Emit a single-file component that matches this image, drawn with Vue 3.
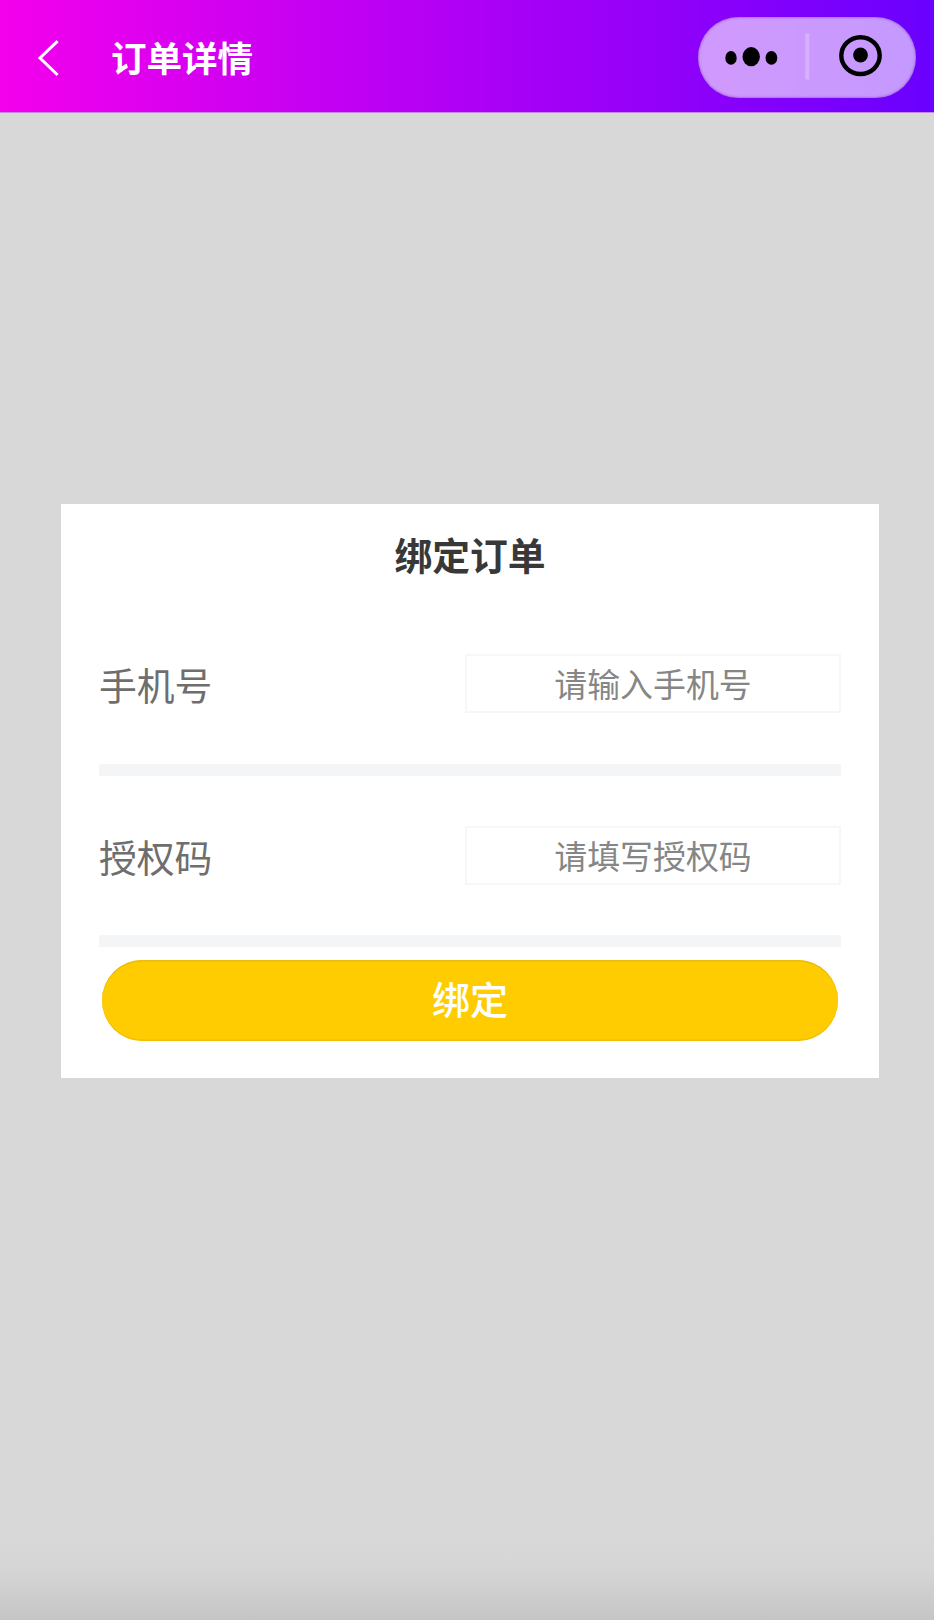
<script setup>
import { reactive } from 'vue'

const fields = [
  { key: 'phone', label: '手机号', placeholder: '请输入手机号' },
  { key: 'code', label: '授权码', placeholder: '请填写授权码' },
]
const form = reactive({ phone: '', code: '' })
</script>

<template>
  <div class="page">
    <header class="navbar">
      <svg class="back" width="24" height="40" viewBox="0 0 24 40">
        <path d="M21.6 3.2 L4 20 L21.6 37" fill="none" stroke="#fff" stroke-width="3" />
      </svg>
      <h1 class="nav-title">订单详情</h1>
      <div class="capsule">
        <svg width="218" height="80" viewBox="0 0 218 80">
          <ellipse cx="33" cy="40.9" rx="5.7" ry="6.9" />
          <ellipse cx="53.2" cy="39.7" rx="8.7" ry="9.6" />
          <ellipse cx="73.4" cy="40.9" rx="5.9" ry="6.9" />
          <rect x="107.3" y="16.5" width="4" height="46" fill="#d9b0ff" />
          <ellipse cx="162.5" cy="38.6" rx="19.2" ry="18.4" fill="none" stroke="#000" stroke-width="4.4" />
          <circle cx="162.5" cy="38" r="7.4" />
        </svg>
      </div>
    </header>

    <main class="body">
      <section class="card">
        <h2 class="card-title">绑定订单</h2>
        <div v-for="f in fields" :key="f.key" class="row" :class="f.key">
          <label class="label" :for="f.key">{{ f.label }}</label>
          <input :id="f.key" v-model="form[f.key]" class="field" :placeholder="f.placeholder" />
        </div>
        <button class="submit" type="button">绑定</button>
      </section>
    </main>
  </div>
</template>

<style>
html,
body {
  margin: 0;
  overflow: hidden;
}
</style>

<style scoped>
.page,
.page * {
  box-sizing: border-box;
}
.page {
  display: flex;
  flex-direction: column;
  width: 934px;
  height: 1620px;
  background: linear-gradient(to bottom, #d8d8d8 0, #d8d8d8 1535px, #d5d5d5 1570px, #cfcfcf 1590px, #c5c5c5 1620px);
  font-family: "Noto Sans CJK SC", sans-serif;
}
.navbar {
  display: flex;
  flex: none;
  align-items: center;
  height: 113px;
  padding: 4px 18px 0 36px;
  border-bottom: 1px solid #c68be0;
  background: linear-gradient(to right, #f400ec, #6a00ff) border-box;
}
.back {
  display: block;
}
.nav-title {
  margin: -2px auto 0 51px;
  color: #fff;
  font-size: 35.5px;
  font-weight: 700;
  line-height: 48px;
}
.capsule {
  width: 218px;
  height: 81px;
  margin-top: -1px;
  border-radius: 41px;
  background: rgba(255, 255, 255, 0.6);
  box-shadow: inset 0 0 2px 1px rgba(100, 40, 160, 0.35);
}
.capsule svg {
  display: block;
}
.body {
  padding: 390.5px 55px 0 61px;
}
.card {
  display: flex;
  flex-direction: column;
  height: 574.5px;
  padding: 0 38px;
  background: #fff;
}
.card-title {
  height: 102px;
  margin: 0;
  color: #383838;
  font-size: 37.8px;
  font-weight: 700;
  line-height: 100px;
  text-align: center;
}
.row {
  display: flex;
  align-items: flex-start;
  justify-content: space-between;
  height: 170px;
  padding-top: 48.5px;
  border-bottom: 12px solid #f3f5f7;
}
.row.code {
  height: 171.5px;
  padding-top: 50px;
}
.label {
  color: #6e6e6e;
  font-size: 37.8px;
  font-weight: 400;
  line-height: 60px;
}
.field {
  width: 376px;
  height: 59px;
  padding: 0 0 3px;
  border: 2px solid #f7f7f7;
  background: #fff;
  color: #808080;
  font-family: inherit;
  font-size: 32.9px;
  text-align: center;
}
.row.code .field {
  padding-bottom: 1px;
}
.field::placeholder {
  color: #868686;
  opacity: 1;
}
.submit {
  height: 81px;
  margin: 12.5px 3px 0;
  padding: 0 0 5px;
  border: 0;
  border-radius: 41px;
  background: #ffcc02;
  box-shadow: inset 0 1.5px 0 #e8bc10, inset 0 -1.5px 0 #f0bf08;
  color: #fff;
  font-family: inherit;
  font-size: 38px;
  font-weight: 500;
}
</style>
